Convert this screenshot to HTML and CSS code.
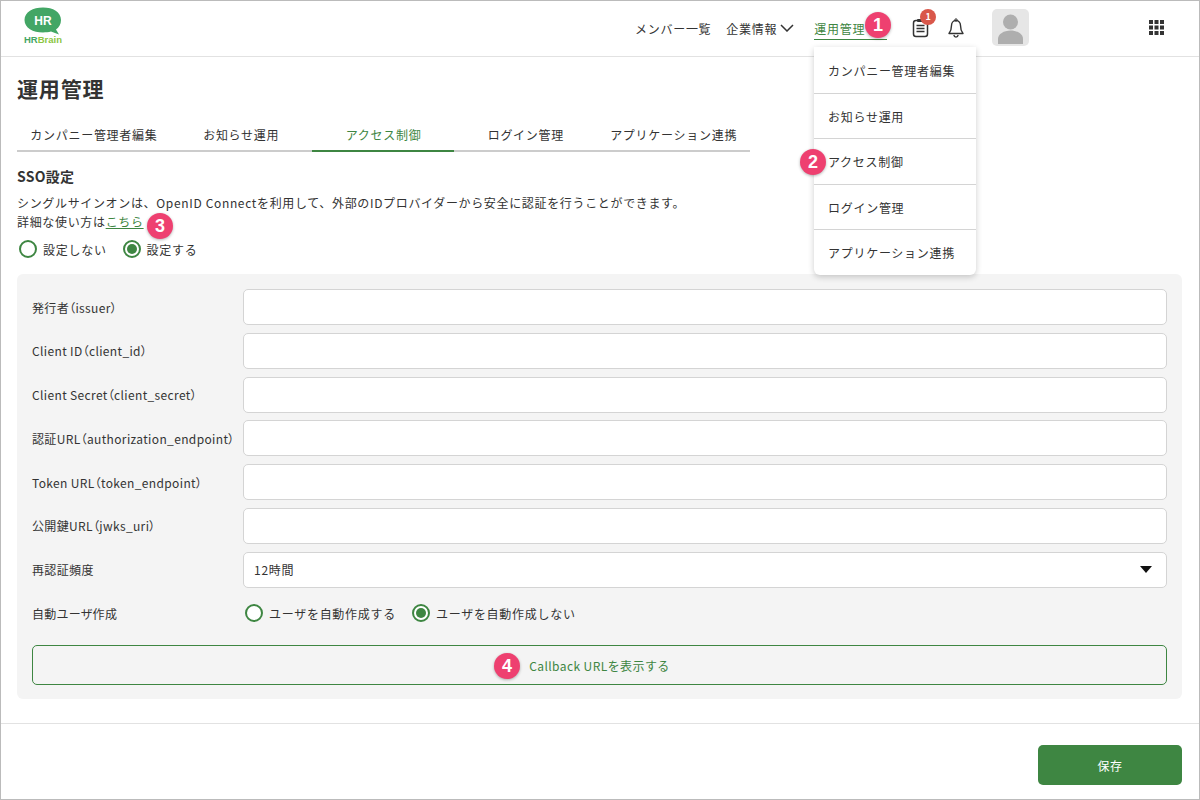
FILE: index.html
```html
<!DOCTYPE html>
<html lang="ja">
<head>
    <meta charset="UTF-8">
    <title>運用管理</title>
    <link rel="stylesheet" href="styles.css">
</head>
<body>
    <div class="app">
        <header class="header">
            <div class="logo">
                <svg width="38" height="28" viewBox="0 0 38 28">
                    <path d="M19 0.5C29 0.5 37 5 37 13C37 17 35 20.500 32 22.500L35 27.500L27 24.600C24.500 25.300 22 25.500 19 25.500C9 25.500 0.500 21 0.500 13C0.500 5 9 0.500 19 0.500Z" fill="#43a665"/>
                    <text x="19" y="18" class="logo-hr" text-anchor="middle">HR</text>
                </svg>
                <div class="logo-name"><span class="logo-name-hr">HR</span><span class="logo-name-brain">Brain</span></div>
            </div>
            <nav class="nav">
                <a class="nav-item">メンバー一覧</a>
                <a class="nav-item nav-company">企業情報
                    <svg width="14" height="8" viewBox="0 0 14 8"><path d="M1 1L7 7L13 1" fill="none" stroke="#333" stroke-width="1.500"/></svg>
                </a>
                <a class="nav-item nav-active">運用管理</a>
            </nav>
            <div class="header-icons">
                <div class="icon-clip">
                    <svg width="17" height="20" viewBox="0 0 17 20">
                        <rect x="1.500" y="2.500" width="14" height="16" rx="2.500" fill="none" stroke="#333" stroke-width="1.500"/>
                        <rect x="5" y="1" width="7" height="3" rx="1" fill="#333"/>
                        <path d="M4.500 7.500H12.500M4.500 10.500H12.500M4.500 13.500H12.500" stroke="#333" stroke-width="1.300"/>
                    </svg>
                    <span class="count">1</span>
                </div>
                <svg class="icon-bell" width="16" height="20" viewBox="0 0 16 20">
                    <path d="M8 2.500C5 2.500 3.500 5 3.500 7.500C3.500 11 3 13 1 15.500H15C13 13 12.500 11 12.500 7.500C12.500 5 11 2.500 8 2.500Z" fill="none" stroke="#333" stroke-width="1.400" stroke-linejoin="round"/>
                    <circle cx="8" cy="2" r="1.200" fill="none" stroke="#333" stroke-width="1"/>
                    <path d="M5.800 17C6.200 18.600 7 19.200 8 19.200C9 19.200 9.800 18.600 10.200 17" fill="none" stroke="#333" stroke-width="1.300"/>
                </svg>
                <div class="avatar">
                    <svg width="37" height="37" viewBox="0 0 37 37">
                        <circle cx="18.500" cy="13" r="7.500" fill="#aeaeae"/>
                        <path d="M6 35V30C6 25 12 21.500 18.500 21.500C25 21.500 31 25 31 30V35Z" fill="#aeaeae"/>
                    </svg>
                </div>
                <svg class="icon-apps" width="15" height="15" viewBox="0 0 15 15" fill="#333">
                    <rect x="0" y="0" width="4" height="4"/><rect x="5.500" y="0" width="4" height="4"/><rect x="11" y="0" width="4" height="4"/>
                    <rect x="0" y="5.500" width="4" height="4"/><rect x="5.500" y="5.500" width="4" height="4"/><rect x="11" y="5.500" width="4" height="4"/>
                    <rect x="0" y="11" width="4" height="4"/><rect x="5.500" y="11" width="4" height="4"/><rect x="11" y="11" width="4" height="4"/>
                </svg>
            </div>
        </header>

        <main class="main">
            <h1 class="title">運用管理</h1>
            <div class="tabs">
                <div class="tab tab-first">カンパニー管理者編集</div>
                <div class="tab">お知らせ運用</div>
                <div class="tab tab-active">アクセス制御</div>
                <div class="tab">ログイン管理</div>
                <div class="tab tab-last">アプリケーション連携</div>
            </div>

            <h2 class="section-title">SSO設定</h2>
            <p class="desc">シングルサインオンは、OpenID Connectを利用して、外部のIDプロバイダーから安全に認証を行うことができます。</p>
            <p class="desc">詳細な使い方は<a class="link">こちら</a></p>
            <div class="radios radios-sso">
                <label class="radio"><span class="radio-mark"></span>設定しない</label>
                <label class="radio"><span class="radio-mark checked"></span>設定する</label>
            </div>

            <section class="panel">
                <div class="row"><div class="label">発行者（issuer）</div><div class="input"></div></div>
                <div class="row"><div class="label">Client ID（client_id）</div><div class="input"></div></div>
                <div class="row"><div class="label">Client Secret（client_secret）</div><div class="input"></div></div>
                <div class="row"><div class="label">認証URL（authorization_endpoint）</div><div class="input"></div></div>
                <div class="row"><div class="label">Token URL（token_endpoint）</div><div class="input"></div></div>
                <div class="row"><div class="label">公開鍵URL（jwks_uri）</div><div class="input"></div></div>
                <div class="row">
                    <div class="label">再認証頻度</div>
                    <div class="input select">12時間<span class="select-arrow"></span></div>
                </div>
                <div class="row">
                    <div class="label">自動ユーザ作成</div>
                    <div class="radios radios-auto">
                        <label class="radio"><span class="radio-mark"></span>ユーザを自動作成する</label>
                        <label class="radio"><span class="radio-mark checked"></span>ユーザを自動作成しない</label>
                    </div>
                </div>
                <button class="callback">Callback URLを表示する</button>
            </section>
        </main>

        <footer class="footer">
            <button class="save">保存</button>
        </footer>

        <div class="menu">
            <div class="menu-item">カンパニー管理者編集</div>
            <div class="menu-item">お知らせ運用</div>
            <div class="menu-item">アクセス制御</div>
            <div class="menu-item">ログイン管理</div>
            <div class="menu-item">アプリケーション連携</div>
        </div>

        <span class="marker marker-1">1</span>
        <span class="marker marker-2">2</span>
        <span class="marker marker-3">3</span>
        <span class="marker marker-4">4</span>
    </div>
</body>
</html>
```
FILE: styles.css
```css
* {
    box-sizing: border-box;
}

body {
    margin: 0;
    font-family: "Noto Sans CJK JP", "Noto Sans", sans-serif;
    font-size: 12px;
    letter-spacing: 0.06em;
    color: #333;
}

.app {
    position: relative;
    width: 1200px;
    height: 800px;
    border: 1px solid #bbb;
    overflow: hidden;
    background: #fff;
}

/* header */
.header {
    display: flex;
    align-items: flex-start;
    height: 56px;
    border-bottom: 1px solid #e2e2e2;
    padding-left: 23px;
}

.logo {
    width: 38px;
    margin-top: 6px;
}

.logo svg {
    display: block;
}

.logo-hr {
    font-family: "Liberation Sans", sans-serif;
    font-size: 12px;
    font-weight: bold;
    letter-spacing: 0;
    fill: #fff;
}

.logo-name {
    font-family: "Liberation Sans", sans-serif;
    font-size: 9.500px;
    font-weight: bold;
    letter-spacing: 0;
    line-height: 10px;
    white-space: nowrap;
}

.logo-name-hr {
    color: #43a665;
}

.logo-name-brain {
    color: #8cc63f;
}

.nav {
    display: flex;
    margin-left: 573px;
    gap: 15px;
}

.nav-item {
    display: flex;
    align-items: center;
    gap: 3px;
    height: 39px;
    padding-top: 17px;
    line-height: 20px;
    white-space: nowrap;
}

.nav-company svg {
    margin-top: -3px;
}

.nav-company {
    margin-right: 5px;
}

.nav-active {
    width: 73px;
    color: #3e8642;
    border-bottom: 1px solid #3e8642;
}

.header-icons {
    display: flex;
    align-items: flex-start;
    margin-left: 25px;
}

.icon-clip {
    position: relative;
    width: 17px;
    height: 20px;
    margin-top: 17px;
}

.icon-clip svg {
    display: block;
}

.count {
    position: absolute;
    top: -9px;
    left: 8px;
    width: 16px;
    height: 16px;
    border-radius: 50%;
    background: #d9574a;
    color: #fff;
    font-size: 9px;
    font-weight: bold;
    letter-spacing: 0;
    line-height: 16px;
    text-align: center;
}

.icon-bell {
    margin: 17px 0 0 19px;
}

.avatar {
    width: 37px;
    height: 37px;
    margin: 8px 0 0 28px;
    border-radius: 5px;
    background: #e6e6e6;
    overflow: hidden;
}

.avatar svg {
    display: block;
}

.icon-apps {
    margin: 19px 0 0 120px;
}

/* main */
.main {
    padding: 0 17px 0 16px;
    height: 667px;
    border-bottom: 1px solid #e2e2e2;
}

.title {
    margin: 0;
    padding-top: 15px;
    font-size: 21px;
    font-weight: bold;
    letter-spacing: 0.04em;
    line-height: 32px;
}

.tabs {
    display: flex;
    width: 733px;
    height: 33px;
    margin-top: 15px;
    border-bottom: 2px solid #ccc;
}

.tab {
    width: 142px;
    height: 33px;
    padding-left: 1px;
    line-height: 32px;
    text-align: center;
    white-space: nowrap;
}

.tab-first {
    width: 153px;
}

.tab-last {
    width: 154px;
}

.tab-active {
    width: 143px;
    color: #3e8642;
    border-bottom: 2px solid #3e8642;
}

.section-title {
    margin: 14px 0 0;
    font-size: 14px;
    font-weight: bold;
    letter-spacing: 0.02em;
    line-height: 20px;
}

.desc {
    margin: 0;
    letter-spacing: 0.055em;
    line-height: 19px;
}

.desc:first-of-type {
    margin-top: 7px;
}

.link {
    color: #3e8642;
    text-decoration: underline;
}

.radios {
    display: flex;
    align-items: center;
    gap: 16px;
    height: 26px;
}

.radios-sso {
    margin: 5px 0 0 2px;
}

.radios-auto {
    margin-left: 2px;
}

.radio {
    display: flex;
    align-items: center;
    gap: 6px;
    white-space: nowrap;
}

.radio-mark {
    position: relative;
    display: block;
    width: 18px;
    height: 18px;
    border: 2px solid #3e8642;
    border-radius: 50%;
    background: #fff;
}

.radio-mark.checked::after {
    content: "";
    position: absolute;
    top: 2px;
    left: 2px;
    width: 10px;
    height: 10px;
    border-radius: 50%;
    background: #3e8642;
}

.panel {
    display: flex;
    flex-direction: column;
    height: 425px;
    margin-top: 12px;
    padding: 15px 15px 14px;
    border-radius: 6px;
    background: #f4f4f4;
}

.row {
    display: flex;
    align-items: center;
    height: 36px;
    margin-bottom: 7.750px;
}

.label {
    width: 211px;
    flex-shrink: 0;
    white-space: nowrap;
    font-feature-settings: "palt";
    letter-spacing: 0.03em;
}

.input {
    flex: 1;
    height: 36px;
    border: 1px solid #d4d4d4;
    border-radius: 5px;
    background: #fff;
}

.select {
    display: flex;
    align-items: center;
    justify-content: space-between;
    padding: 0 14px 0 10px;
}

.select-arrow {
    width: 0;
    height: 0;
    border-left: 6px solid transparent;
    border-right: 6px solid transparent;
    border-top: 7px solid #111;
}

.callback {
    width: 100%;
    height: 40px;
    margin-top: 6px;
    border: 1px solid #3e8642;
    border-radius: 5px;
    background: transparent;
    color: #3e8642;
    font: inherit;
    letter-spacing: 0.035em;
}

/* footer */
.footer {
    display: flex;
    justify-content: flex-end;
    padding: 21px 17px 0 0;
}

.save {
    width: 144px;
    height: 40px;
    border: none;
    border-radius: 5px;
    background: #3e8642;
    color: #fff;
    font: inherit;
    letter-spacing: 0.05em;
}

/* dropdown over the page */
.menu {
    position: absolute;
    top: 46px;
    left: 813px;
    width: 162px;
    height: 228px;
    padding-top: 1px;
    border-radius: 0 0 6px 6px;
    background: #fff;
    box-shadow: 0 2px 6px rgba(0, 0, 0, 0.2);
}

.menu-item {
    height: 45.600px;
    padding-left: 14px;
    line-height: 45px;
    border-bottom: 1px solid #d4d4d4;
    white-space: nowrap;
}

.menu-item:last-child {
    border-bottom: none;
}

/* numbered callouts */
.marker {
    position: absolute;
    width: 26px;
    height: 26px;
    border-radius: 50%;
    background: #ee4070;
    color: #fff;
    font-family: "Liberation Sans", sans-serif;
    font-size: 18px;
    font-weight: bold;
    letter-spacing: 0;
    line-height: 26px;
    text-align: center;
    box-shadow: 0 1px 3px rgba(0, 0, 0, 0.3);
}

.marker-1 {
    top: 11px;
    left: 864px;
}

.marker-2 {
    top: 148px;
    left: 799px;
}

.marker-3 {
    top: 212px;
    left: 146px;
}

.marker-4 {
    top: 652px;
    left: 493px;
}
```
